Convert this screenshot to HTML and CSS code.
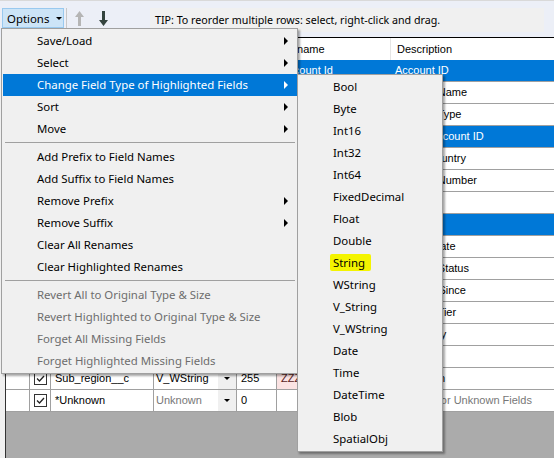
FILE: index.html
```html
<!DOCTYPE html>
<html lang="en">
<head>
    <meta charset="UTF-8">
    <title>Select Fields</title>
    <link rel="stylesheet" href="styles.css">
</head>
<body>

    <!-- Toolbar -->
    <div class="toolbar">
        <button class="opt-btn">Options<span class="caret"></span></button>
        <span class="tb-sep"></span>
        <span class="tb-arrow up">
            <svg width="9" height="15" viewBox="0 0 9 15"><path d="M4.5 0 L9 6 L6 6 L6 15 L3 15 L3 6 L0 6 Z" fill="#b5b5b5"/></svg>
        </span>
        <span class="tb-arrow down">
            <svg width="9" height="15" viewBox="0 0 9 15"><path d="M4.5 15 L9 9 L6 9 L6 0 L3 0 L3 9 L0 9 Z" fill="#34443f"/></svg>
        </span>
        <div class="tip">TIP: To reorder multiple rows: select, right-click and drag.</div>
    </div>

    <!-- Field grid (cells under the open menu are left blank) -->
    <div class="grid">
        <div class="row head">
            <div></div><div></div><div></div><div></div><div></div><div>Rename</div><div>Description</div>
        </div>
        <div class="row sel">
            <div></div><div class="chk"></div><div></div><div class="type"><span class="dd"></span></div><div></div><div>Account Id</div><div>Account ID</div>
        </div>
        <div class="row">
            <div></div><div class="chk"></div><div></div><div class="type"><span class="dd"></span></div><div></div><div></div><div>Account Name</div>
        </div>
        <div class="row">
            <div></div><div class="chk"></div><div></div><div class="type"><span class="dd"></span></div><div></div><div></div><div>Account Type</div>
        </div>
        <div class="row sel">
            <div></div><div class="chk"></div><div></div><div class="type"><span class="dd"></span></div><div></div><div></div><div>Parent Account ID</div>
        </div>
        <div class="row">
            <div></div><div class="chk"></div><div></div><div class="type"><span class="dd"></span></div><div></div><div></div><div>Billing Country</div>
        </div>
        <div class="row">
            <div></div><div class="chk"></div><div></div><div class="type"><span class="dd"></span></div><div></div><div></div><div>Account Number</div>
        </div>
        <div class="row">
            <div></div><div class="chk"></div><div></div><div class="type"><span class="dd"></span></div><div></div><div></div><div></div>
        </div>
        <div class="row sel">
            <div></div><div class="chk"></div><div></div><div class="type"><span class="dd"></span></div><div></div><div></div><div></div>
        </div>
        <div class="row">
            <div></div><div class="chk"></div><div></div><div class="type"><span class="dd"></span></div><div></div><div></div><div>Signed Date</div>
        </div>
        <div class="row">
            <div></div><div class="chk"></div><div></div><div class="type"><span class="dd"></span></div><div></div><div></div><div>Account Status</div>
        </div>
        <div class="row">
            <div></div><div class="chk"></div><div></div><div class="type"><span class="dd"></span></div><div></div><div></div><div>Member Since</div>
        </div>
        <div class="row">
            <div></div><div class="chk"></div><div></div><div class="type"><span class="dd"></span></div><div></div><div></div><div>Account Tier</div>
        </div>
        <div class="row">
            <div></div><div class="chk"></div><div></div><div class="type"><span class="dd"></span></div><div></div><div></div><div>Billing City</div>
        </div>
        <div class="row">
            <div></div><div class="chk"></div><div></div><div class="type"><span class="dd"></span></div><div></div><div></div><div></div>
        </div>
        <div class="row">
            <div></div><div class="chk"></div><div>Sub_region__c</div><div class="type">V_WString<span class="dd"></span></div><div>255</div><div class="renamed">ZZZ</div><div>Subregion</div>
        </div>
        <div class="row">
            <div></div><div class="chk"></div><div>*Unknown</div><div class="type dim">Unknown<span class="dd"></span></div><div>0</div><div></div><div class="dim">Dynamic or Unknown Fields</div>
        </div>
    </div>

    <!-- Options dropdown -->
    <div class="menu main">
        <div class="item more">Save/Load</div>
        <div class="item more">Select</div>
        <div class="item more hl">Change Field Type of Highlighted Fields</div>
        <div class="item more">Sort</div>
        <div class="item more">Move</div>
        <div class="sep"></div>
        <div class="item">Add Prefix to Field Names</div>
        <div class="item">Add Suffix to Field Names</div>
        <div class="item more">Remove Prefix</div>
        <div class="item more">Remove Suffix</div>
        <div class="item">Clear All Renames</div>
        <div class="item">Clear Highlighted Renames</div>
        <div class="sep"></div>
        <div class="item off">Revert All to Original Type &amp; Size</div>
        <div class="item off">Revert Highlighted to Original Type &amp; Size</div>
        <div class="item off">Forget All Missing Fields</div>
        <div class="item off">Forget Highlighted Missing Fields</div>
    </div>

    <!-- Field type submenu -->
    <div class="menu sub">
        <div class="item">Bool</div>
        <div class="item">Byte</div>
        <div class="item">Int16</div>
        <div class="item">Int32</div>
        <div class="item">Int64</div>
        <div class="item">FixedDecimal</div>
        <div class="item">Float</div>
        <div class="item">Double</div>
        <div class="item"><span class="mark">String</span></div>
        <div class="item">WString</div>
        <div class="item">V_String</div>
        <div class="item">V_WString</div>
        <div class="item">Date</div>
        <div class="item">Time</div>
        <div class="item">DateTime</div>
        <div class="item">Blob</div>
        <div class="item">SpatialObj</div>
    </div>

</body>
</html>
```

FILE: styles.css
```css
* {
    box-sizing: border-box;
}

body {
    margin: 0;
    height: 100vh;
    overflow: hidden;
    background-color: #f0f0f0;
    font-family: "Noto Sans", sans-serif;
    font-size: 11.4px;
    color: #000;
}

/* Toolbar along the top */
.toolbar {
    height: 37px;
    border-top: 1px solid #d9d9d9;
    background-color: #eceff7;
    display: flex;
    align-items: flex-start;
    padding-top: 7px;
}

.opt-btn {
    margin-left: 2px;
    width: 62px;
    height: 20px;
    padding: 0 0 0 4px;
    display: flex;
    align-items: center;
    background-color: #cce4f7;
    border: 1px solid #99c9ef;
    font: inherit;
    color: #000;
}

.caret {
    margin-left: 7px;
    border-left: 3px solid transparent;
    border-right: 3px solid transparent;
    border-top: 3px solid #000;
}

.tb-sep {
    width: 1px;
    height: 22px;
    margin-left: 2px;
    background-color: #c8c8c8;
}

.tb-arrow {
    display: flex;
    margin-top: 3px;
}
.tb-arrow.up {
    margin-left: 8px;
}
.tb-arrow.down {
    margin-left: 15px;
}

.tip {
    margin-left: 42px;
    width: 394px;
    height: 24px;
    padding-left: 5px;
    line-height: 24px;
    font-size: 10.7px;
    background-color: #f0f0f0;
}

/* Grid of fields */
.grid {
    margin-left: 5px;
    height: calc(100vh - 37px);
    background-color: #ababab;
    border-top: 1px solid #000;
    border-left: 1px solid #333;
    font-family: "Liberation Sans", Arial, sans-serif;
    font-size: 11px;
}

.row {
    display: grid;
    grid-template-columns: 24px 21px 103px 83px 40px 114px 1fr;
    height: 22px;
    background-color: #fff;
}

.row > div {
    border-right: 1px solid #a0a0a0;
    border-bottom: 1px solid #a0a0a0;
    padding-left: 4px;
    line-height: 21px;
    white-space: nowrap;
    overflow: hidden;
}
.row > div:last-child {
    border-right: none;
}

.head > div {
    border-right-color: #e5e5e5;
    border-bottom: none;
    line-height: 22px;
    padding-left: 6px;
}

.sel {
    background-color: #0078d7;
    color: #fff;
}
.sel > div {
    border-right-color: #0078d7;
}

/* Checked box drawn in the second column */
.chk {
    display: flex;
    align-items: center;
}
.chk::before {
    content: "";
    width: 13px;
    height: 13px;
    background: url("data:image/svg+xml,%3Csvg xmlns='http://www.w3.org/2000/svg' width='13' height='13'%3E%3Crect x='.5' y='.5' width='12' height='12' fill='%23fff' stroke='%23333'/%3E%3Cpath d='M3 6.5 L5.5 9 L10 4' fill='none' stroke='%23222' stroke-width='1.3'/%3E%3C/svg%3E");
}

.row > .type {
    display: flex;
    justify-content: space-between;
    padding-left: 2px;
}
.dd {
    width: 18px;
    margin-left: auto;
    background-color: #f0f0f0;
    display: flex;
    align-items: center;
    justify-content: center;
}
.dd::before {
    content: "";
    border-left: 3px solid transparent;
    border-right: 3px solid transparent;
    border-top: 3px solid #000;
}
.sel .dd {
    background-color: #0078d7;
}

.dim {
    color: #777;
}

.row > .renamed {
    background-color: #fbe3e3;
    color: #5a1f1f;
}

/* Drop-down menus */
.menu {
    position: absolute;
    background-color: #f0f0f0;
    border: 1px solid #a0a0a0;
    padding: 1px 0 1px 1px;
    box-shadow: 2px 2px 2px rgba(0, 0, 0, 0.35);
}

.main {
    left: 1px;
    top: 28px;
    width: 297px;
}

.sub {
    left: 297px;
    top: 74px;
    width: 146px;
}

.item {
    position: relative;
    height: 22px;
    line-height: 22px;
    padding-left: 34px;
    white-space: nowrap;
}
.item.hl {
    background-color: #0078d7;
    color: #fff;
}
.item.off {
    color: #6d6d6d;
}
.item.more::after {
    content: "";
    position: absolute;
    right: 9px;
    top: 7px;
    border-top: 4px solid transparent;
    border-bottom: 4px solid transparent;
    border-left: 4px solid #000;
}
.item.hl.more::after {
    border-left-color: #fff;
}

.sep {
    height: 6px;
    padding-top: 2px;
}
.sep::before {
    content: "";
    display: block;
    height: 1px;
    margin: 0 2px;
    background-color: #a0a0a0;
}

/* Yellow marker over "String" */
.mark {
    display: inline-block;
    line-height: 17px;
    padding: 0 6px 0 3px;
    margin-left: -3px;
    background-color: #f4f400;
    border-radius: 2px;
}
```
